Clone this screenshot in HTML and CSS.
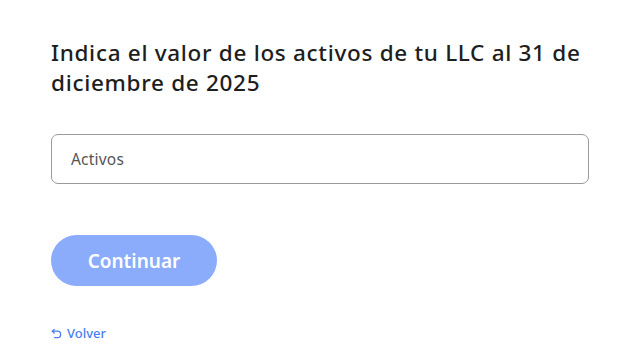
FILE: index.html
```html
<!DOCTYPE html>
<html lang="es">
<head>
    <meta charset="UTF-8">
    <meta name="viewport" content="width=device-width, initial-scale=1.0">
    <title>Activos</title>
    <link rel="stylesheet" href="styles.css">
</head>
<body>
    <div class="container">
        <h1 class="question">Indica el valor de los activos de tu LLC al 31 de diciembre de 2025</h1>
        <input type="text" class="field" placeholder="Activos" />
        <button class="button" disabled>Continuar</button>
        <a href="#" class="back">
            <svg width="11" height="11" viewBox="0 0 12 12" fill="none" stroke="currentColor" stroke-width="1.4" stroke-linecap="round" stroke-linejoin="round">
                <path d="M3.5 1.5 L1.5 3.5 L3.5 5.5"/>
                <path d="M1.5 3.5 H7 A3.5 3.5 0 0 1 7 10.5 H4"/>
            </svg>
            Volver
        </a>
    </div>
</body>
</html>
```
FILE: styles.css
```css
* {
    margin: 0;
    padding: 0;
    box-sizing: border-box;
}
body {
    background: #fff;
    font-family: 'Noto Sans', sans-serif;
    color: #222;
}
.container {
    width: 538px;
    margin-left: 51px;
    padding-top: 38px;
    display: flex;
    flex-direction: column;
    align-items: flex-start;
}
.question {
    font-size: 22.5px;
    font-weight: 500;
    line-height: 30px;
    letter-spacing: 0.7px;
    color: #1e1e1e;
}
.field {
    width: 100%;
    height: 50px;
    margin-top: 36px;
    padding: 0 19px;
    border: 1px solid #9a9a9a;
    border-radius: 7px;
    font-family: inherit;
    font-size: 15.5px;
    letter-spacing: 0.2px;
    outline: none;
}
.field::placeholder {
    color: #555;
}
.button {
    margin-top: 51px;
    width: 166px;
    height: 51px;
    border: none;
    border-radius: 26px;
    background: #8aacfb;
    color: #fff;
    font-family: inherit;
    font-size: 19px;
    font-weight: 600;
}
.back {
    margin-top: 38px;
    display: flex;
    align-items: center;
    gap: 5px;
    color: #4a7ef2;
    font-size: 13px;
    font-weight: 500;
    text-decoration: none;
}
```
